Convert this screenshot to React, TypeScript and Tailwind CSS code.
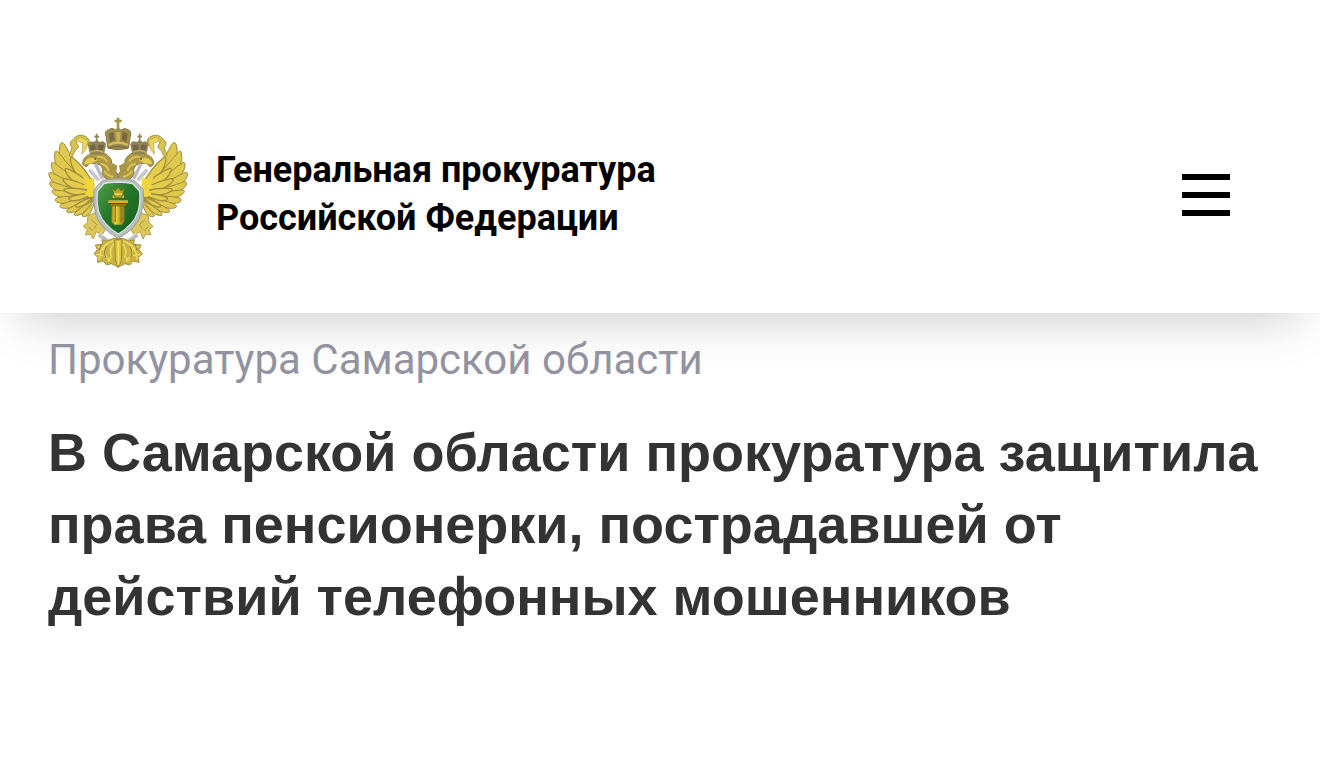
const OUTER_FEATHERS = [
  "M158 232Q108 166 78 108Q68 90 62 106Q50 142 88 196Z",
  "M156 238Q98 178 60 132Q48 116 46 132Q40 166 78 208Z",
  "M154 242Q90 194 48 162Q36 152 36 166Q36 194 76 222Z",
  "M152 247Q82 212 40 190Q26 184 29 198Q36 222 76 236Z",
  "M150 252Q80 230 40 217Q28 214 32 226Q44 246 82 250Z",
  "M152 257Q84 244 46 241Q34 241 40 250Q54 266 88 264Z",
  "M154 262Q92 256 54 264Q42 270 52 277Q68 286 98 276Z",
  "M156 266Q102 268 66 284Q56 292 68 295Q86 300 110 286Z",
  "M160 270Q116 278 84 300Q78 308 90 309Q108 310 126 294Z",
  "M164 272Q130 288 106 310Q102 318 112 318Q130 316 142 298Z",
  "M168 276Q148 292 128 316Q128 322 136 321Q152 318 158 298Z",
];

const INNER_FEATHERS = [
  "M164 226Q136 172 102 146Q94 140 93 150Q96 182 132 218Z",
  "M162 230Q120 192 84 177Q76 174 78 184Q88 210 126 230Z",
  "M160 238Q112 212 76 207Q68 208 74 216Q90 236 124 242Z",
  "M160 246Q112 232 78 237Q70 241 80 246Q98 258 126 254Z",
  "M162 254Q118 250 90 264Q84 270 96 272Q112 276 132 266Z",
  "M166 262Q132 268 110 286Q106 293 118 292Q136 288 146 276Z",
];

function EagleHalf() {
  return (
    <g strokeLinejoin="round">
      {/* Wing */}
      <path
        d="M160 208L128 188L108 156L72 122L52 150L46 186L46 226L60 264L90 292L138 304L170 266Z"
        fill="#c4af48"
      />
      <g fill="#dfc84e" stroke="#a08d3e" strokeWidth="3">
        {OUTER_FEATHERS.map((d) => (
          <path key={d} d={d} />
        ))}
      </g>
      <g fill="#e4cc4c" stroke="#a18e3e" strokeWidth="4">
        {INNER_FEATHERS.map((d) => (
          <path key={d} d={d} />
        ))}
      </g>
      <path d="M164 204L150 208L130 202L142 222L132 228L144 240L136 254L150 262L168 260Z" fill="#f2d53d" />

      {/* Ribbon */}
      <path
        d="M90 138L98 114Q86 100 102 88Q118 70 138 80Q154 88 148 108L132 98Q118 86 110 96L118 112L106 124L98 142Z"
        fill="#d9c44c"
        stroke="#a49343"
        strokeWidth="3"
      />
      <path d="M106 92L124 82L146 92L140 118L128 134L130 100Z" fill="#ead45c" stroke="#b09e48" strokeWidth="2" />

      {/* Neck and head */}
      <path
        d="M130 164Q130 140 154 134Q184 118 206 138Q220 150 216 164Q220 182 234 190L236 210L204 210Q184 198 190 180Q186 162 168 162L152 160L140 172Z"
        fill="#ae9947"
        stroke="#8d7d40"
        strokeWidth="3"
      />
      <path d="M134 164Q138 144 158 144L176 150L160 160L146 162Z" fill="#e6cc4c" />
      <path d="M172 142Q192 138 204 156M184 162Q204 164 208 184M194 184Q204 198 222 202" fill="none" stroke="#dac354" strokeWidth="6" />
      <circle cx="168" cy="148" r="3" fill="#655c35" />
      <path d="M212 156L234 168L230 190L212 180Z" fill="#a9954a" />

      {/* Side crown */}
      <path d="M152 132L147 106Q148 92 164 98L172 92L180 98Q198 92 199 106L193 132Z" fill="#938454" stroke="#81734b" strokeWidth="2" />
      <path d="M152 108L166 104L170 120L154 122ZM178 104L194 107L191 122L175 120Z" fill="#6f6548" />
      <path d="M172 72V98M165 81H179" stroke="#91854f" strokeWidth="5" />
      <path d="M152 128Q172 118 192 128" fill="none" stroke="#c9b65d" strokeWidth="4" />

      {/* Sceptre and leg */}
      <path d="M150 180L178 212M168 162L190 208" stroke="#b9bac1" strokeWidth="10" />
      <path d="M151 178L177 214" stroke="#e0e0e4" strokeWidth="3" />
      <path
        d="M146 318L170 308L184 338L198 360L188 376L170 366L162 388L154 374L138 376L144 360L132 350L144 338Z"
        fill="#ddc65a"
        stroke="#b5a24d"
        strokeWidth="3"
      />
      <path d="M156 330L172 344L164 358M148 352L160 364" fill="none" stroke="#a9994d" strokeWidth="3" />
      <path d="M178 376L214 398" stroke="#bcbfc2" strokeWidth="12" />
      <path d="M182 370L210 390" stroke="#e6e8e8" strokeWidth="3" />

      {/* Tail */}
      <path
        d="M222 386L204 394L188 390L190 404L168 406L174 420L164 432L176 444L174 458L192 454L202 466L216 462L236 472V386Z"
        fill="#c9b345"
        stroke="#a4933f"
        strokeWidth="3"
      />
      <path
        d="M222 394Q196 402 194 422Q196 442 214 454M210 398Q180 414 180 450M224 402Q208 420 216 440L206 456M174 410L198 420M170 434L192 438"
        fill="none"
        stroke="#ecd65c"
        strokeWidth="5"
      />
      <path d="M202 410Q190 426 200 444M186 402L180 422" fill="none" stroke="#85783d" strokeWidth="3" />
    </g>
  );
}

function Emblem() {
  return (
    <svg
      className="h-[152px] w-[140px] shrink-0"
      viewBox="26 22 420 456"
      role="img"
      aria-label="Эмблема прокуратуры"
    >
      <defs>
        <linearGradient id="shield" x1="0" y1="0" x2="1" y2="1">
          <stop offset="0" stopColor="#55a14c" />
          <stop offset="0.45" stopColor="#26772a" />
          <stop offset="1" stopColor="#145d1e" />
        </linearGradient>
        <linearGradient id="pillar">
          <stop offset="0" stopColor="#9c841c" />
          <stop offset="0.35" stopColor="#f1d33b" />
          <stop offset="0.6" stopColor="#c5a62a" />
          <stop offset="1" stopColor="#7e781c" />
        </linearGradient>
      </defs>

      <EagleHalf />
      <g transform="translate(473 0) scale(-1 1)">
        <EagleHalf />
      </g>

      {/* Main crown */}
      <path
        d="M206 116L200 80Q194 64 208 60Q222 52 228 62L236 54L245 62Q254 52 266 60Q278 64 273 80L267 116Q236 124 206 116Z"
        fill="#a08d4c"
        stroke="#85774a"
        strokeWidth="3"
      />
      <path d="M236 24V58M226 34H247" stroke="#a69448" strokeWidth="8" />
      <path d="M208 72L222 66L226 90L212 98ZM250 66L265 72L261 98L247 90Z" fill="#776a42" />
      <path d="M229 67H244L241 98H232Z" fill="#c8b052" />
      <path d="M208 106Q236 92 265 106" fill="none" stroke="#d5be5b" strokeWidth="6" />
      <path d="M209 115Q236 106 264 115" fill="none" stroke="#786c43" strokeWidth="4" />

      {/* Tail centre */}
      <path d="M226 390H248L246 452L237 474L228 452Z" fill="#dfc23c" stroke="#9b8939" strokeWidth="3" />
      <path d="M237 394V466" stroke="#f5e05c" strokeWidth="5" />

      {/* Shield */}
      <path
        d="M237 207Q208 209 190 212L164 240Q160 276 168 310Q180 356 237 386Q294 356 306 310Q316 276 312 240L284 212Q264 208 237 207Z"
        fill="#b7bfbf"
        stroke="#969f9e"
        strokeWidth="3"
      />
      <path
        d="M237 217Q210 218 194 222L174 245Q171 278 178 306Q190 345 237 373Q284 345 296 306Q304 278 301 245L280 222Q262 218 237 217Z"
        fill="url(#shield)"
        stroke="#dbe3df"
        strokeWidth="4"
      />

      {/* Pillar of law */}
      <path d="M218 282H256V334L248 345H225L216 336Z" fill="url(#pillar)" />
      <path d="M228 290V338M245 290V338" stroke="#8e7d21" strokeWidth="4" />
      <path d="M208 274H266L260 290H212Z" fill="#4d601c" />
      <path d="M207 276H266M220 261H254" stroke="#d4b332" strokeWidth="8" />
      <path d="M223 250L216 236L228 243L236 232L245 243L257 236L251 250L247 264H227Z" fill="#b79f28" stroke="#4c681d" strokeWidth="2" />
      <path d="M225 253H249" stroke="#f0d752" strokeWidth="5" />
      <path d="M214 286H260" stroke="#a08b25" strokeWidth="4" />
    </svg>
  );
}

function Header() {
  return (
    <header className="flex items-center justify-between bg-white pt-[117px] pr-[90px] pb-11 pl-12 shadow-[0_24px_48px_-20px_rgba(0,0,0,0.22)]">
      <a href="#" className="flex items-center gap-7 text-black">
        <Emblem />
        <span className="pt-0.5 text-[36px] leading-[48px] font-bold">
          Генеральная прокуратура
          <br />
          Российской Федерации
        </span>
      </a>
      <button type="button" aria-label="Меню" className="mt-1 flex w-12 shrink-0 flex-col gap-3">
        <span className="h-1.5 bg-black" />
        <span className="h-1.5 bg-black" />
        <span className="h-1.5 bg-black" />
      </button>
    </header>
  );
}

export default function App() {
  return (
    <div className="min-h-screen bg-white font-['Roboto',sans-serif]">
      <Header />
      <main className="px-12 pt-[19px] pb-12">
        <p className="text-[42px] leading-[56px] text-[#93939f]">Прокуратура Самарской области</p>
        <h1 className="mt-7 font-['Liberation_Sans',Arial,sans-serif] text-[54px] leading-[72px] font-bold text-[#333333]">
          В Самарской области прокуратура защитила права пенсионерки, пострадавшей от действий
          телефонных мошенников
        </h1>
      </main>
    </div>
  );
}
